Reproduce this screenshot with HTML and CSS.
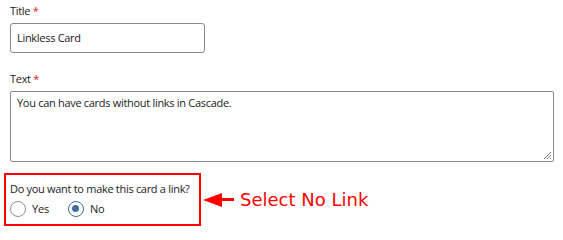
FILE: index.html
```html
<!DOCTYPE html>
<html>
<head>
<meta charset="utf-8">
<link rel="stylesheet" href="styles.css">
</head>
<body>
<div class="form">
  <div class="field">
    <label class="label">Title <span class="req">*</span></label>
    <div class="input">Linkless Card</div>
  </div>
  <div class="field">
    <label class="label">Text <span class="req">*</span></label>
    <div class="textarea">You can have cards without links in Cascade.
      <svg class="grip" width="9" height="9" viewBox="0 0 9 9"><path d="M8 1L1 8M8 4L4 8M8 7L7 8" stroke="#7a7a7a" stroke-width="1"/></svg>
    </div>
  </div>
  <div class="callout-row">
    <div class="choice">
      <div class="question">Do you want to make this card a link?</div>
      <div class="radios">
        <span class="opt"><span class="radio"></span>Yes</span>
        <span class="opt"><span class="radio checked"></span>No</span>
      </div>
    </div>
    <div class="arrow">
      <span class="head"></span><span class="shaft"></span>
    </div>
    <div class="note">Select No Link</div>
  </div>
</div>
</body>
</html>
```
FILE: styles.css
```css
html, body { margin: 0; padding: 0; background: #fff; }
body { font-family: "Open Sans", sans-serif; color: #222; }
.form { padding: 4px 9px 0 10px; }
.field { margin-bottom: 19px; }
.label { display: block; font-size: 11px; letter-spacing: -0.3px; line-height: 14px; color: #222; margin-bottom: 5px; }
.req { color: #d22; }
.input {
  box-sizing: border-box; width: 195px; height: 30px;
  border: 1px solid #8a8a8a; border-radius: 3px;
  font-size: 11px; letter-spacing: -0.3px; line-height: 28px; padding: 0 6px; color: #222;
}
.textarea {
  position: relative; box-sizing: border-box; width: 544px; height: 71px;
  border: 1px solid #8a8a8a; border-radius: 2px;
  font-size: 11px; letter-spacing: -0.3px; line-height: 14px; padding: 4px 6px;
}
.grip { position: absolute; right: 1px; bottom: 1px; }
.callout-row { display: flex; align-items: center; margin-left: -6px; margin-top: -8px; }
.choice {
  box-sizing: border-box; width: 197px; height: 53px;
  border: 2px solid #f00; padding: 7px 0 0 4px;
}
.question { font-size: 11px; letter-spacing: -0.3px; line-height: 14px; color: #222; white-space: nowrap; }
.radios { display: flex; gap: 19px; margin-top: 5px; font-size: 11px; letter-spacing: -0.2px; line-height: 16px; }
.opt { display: flex; align-items: center; gap: 6px; }
.radio {
  box-sizing: border-box; width: 16px; height: 16px; border-radius: 50%;
  border: 1.5px solid #8f8f8f; display: inline-block; position: relative;
}
.radio.checked { border-color: #3f6f9f; }
.radio.checked::after {
  content: ""; position: absolute; left: 3px; top: 3px; width: 7px; height: 7px;
  border-radius: 50%; background: #3f6f9f;
}
.arrow { display: flex; align-items: center; margin-left: 2px; }
.head { width: 0; height: 0; border-top: 7px solid transparent; border-bottom: 7px solid transparent; border-right: 19px solid #f00; }
.shaft { width: 12px; height: 3px; background: #f00; }
.note { font-family: "DejaVu Sans", sans-serif; font-size: 18px; color: #f00; margin-left: 6px; }
```
